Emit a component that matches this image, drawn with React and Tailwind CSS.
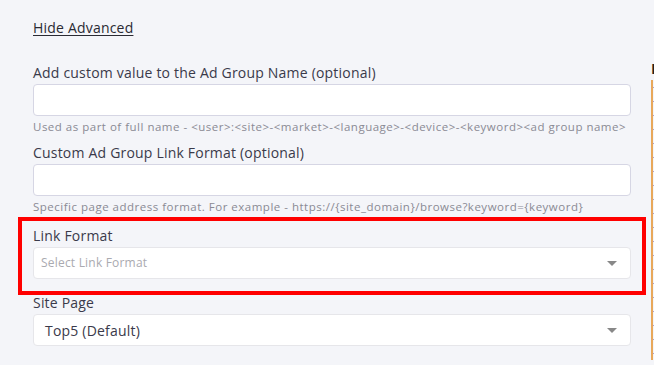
import React from 'react';

const font = { fontFamily: '"Open Sans", "Liberation Sans", sans-serif' };

function Caret() {
  return (
    <svg width="10" height="5" viewBox="0 0 10 5" className="shrink-0">
      <path d="M0 0 L10 0 L5 5 Z" fill="#888" />
    </svg>
  );
}

function TextField({ label, help }) {
  return (
    <div className="flex flex-col">
      <label className="text-[14px] leading-[20px] tracking-[0.2px] text-[#3a3a4a] mb-[1px]">{label}</label>
      <input className="h-[32px] w-full rounded-[4px] border border-[#d6d6e4] bg-white outline-none" />
      {help && (
        <p className="mt-[3px] text-[11.5px] leading-[16px] tracking-[0.5px] text-[#8a8a94] whitespace-nowrap">{help}</p>
      )}
    </div>
  );
}

function SelectField({ label, value, placeholder }) {
  return (
    <div className="flex flex-col">
      <label className="text-[14px] leading-[20px] tracking-[0.2px] text-[#3a3a4a] mb-[1px]">{label}</label>
      <div className="h-[32px] w-full rounded-[4px] border border-[#e6e6ea] bg-white flex items-center justify-between pr-[13px]">
        {value ? (
          <span className="pl-[11px] text-[14px] tracking-[0.2px] text-[#3a3a4a]">{value}</span>
        ) : (
          <span className="pl-[7px] text-[12px] tracking-[0.2px] text-[#aaaab0]">{placeholder}</span>
        )}
        <Caret />
      </div>
    </div>
  );
}

export default function App() {
  return (
    <div className="w-[654px] h-[365px] overflow-hidden bg-[#f4f5f9] flex" style={font}>
      <div className="w-[651px] shrink-0 pl-[33px] pr-[20px] pt-[18px] flex flex-col">
        <a className="text-[14px] leading-[20px] tracking-[0.2px] text-[#2a2a33] underline underline-offset-2 self-start">
          Hide Advanced
        </a>
        <div className="mt-[25px]">
          <TextField
            label="Add custom value to the Ad Group Name (optional)"
            help="Used as part of full name - <user>:<site>-<market>-<language>-<device>-<keyword><ad group name>"
          />
        </div>
        <div className="mt-[8px]">
          <TextField
            label="Custom Ad Group Link Format (optional)"
            help="Specific page address format. For example - https://{site_domain}/browse?keyword={keyword}"
          />
        </div>
        <div className="mt-[2px] -mx-[15px] border-[4px] border-[#ff0000] px-[11px] pt-[5px] pb-[12px]">
          <SelectField label="Link Format" placeholder="Select Link Format" />
        </div>
        <div className="-mt-[2px]">
          <SelectField label="Site Page" value="Top5 (Default)" />
        </div>
        <div className="mt-[16px] text-[14px] leading-[20px] text-[#3a3a4a]">Market</div>
      </div>
      <div className="flex-1 overflow-hidden pt-[58px]">
        <div className="text-[15px] font-bold leading-[20px] text-[#222]">L</div>
        <div className="mt-[2px] flex flex-col">
          {Array.from({ length: 20 }).map((_, i) => (
            <span key={i} className="text-[12px] leading-[14px] text-[#3b82c4] border-l-2 border-[#e8a85a]">
              {'{'}
            </span>
          ))}
        </div>
      </div>
    </div>
  );
}
